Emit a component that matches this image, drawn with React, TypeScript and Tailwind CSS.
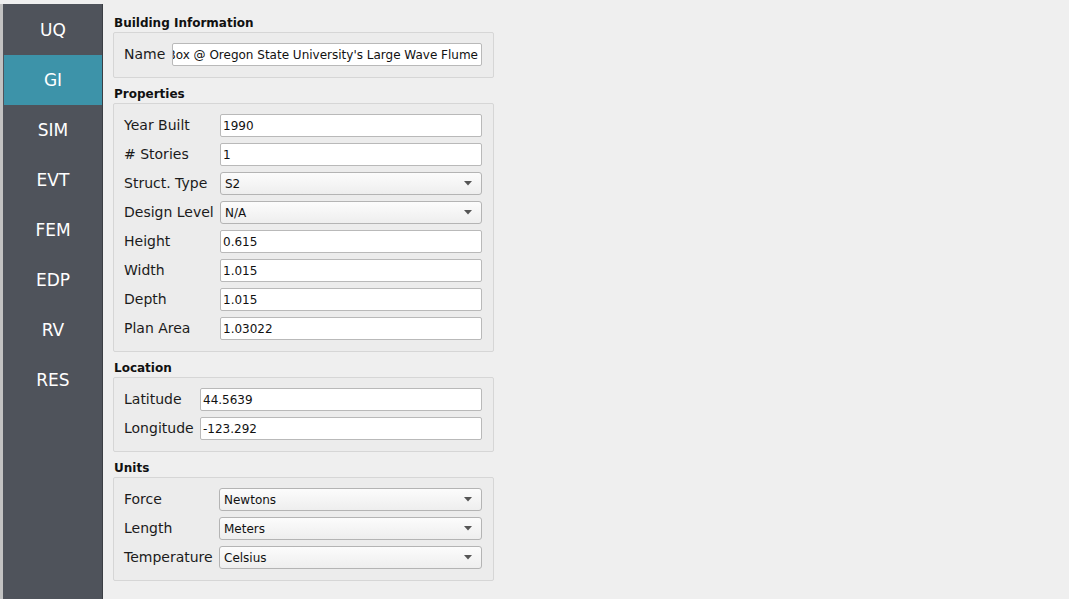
import React from "react";

const font = { fontFamily: '"DejaVu Sans", "Liberation Sans", sans-serif' };

function Field({ value }: { value: string }) {
  return (
    <div className="flex-1 h-[23px] bg-white border border-[#b9b9b9] rounded-[2px] flex items-center pl-[2px] text-[12px] text-[#111] overflow-hidden whitespace-nowrap">
      {value}
    </div>
  );
}

function Combo({ value }: { value: string }) {
  return (
    <div className="flex-1 h-[23px] border border-[#b4b4b4] rounded-[3px] bg-gradient-to-b from-[#fcfcfc] to-[#eeeeee] flex items-center pl-[4px] pr-[9px] text-[12px] text-[#111]">
      <span className="flex-1">{value}</span>
      <svg width="8" height="5" viewBox="0 0 8 5">
        <path d="M0 0 L8 0 L4 4.5 Z" fill="#555" />
      </svg>
    </div>
  );
}

function Row({ label, w, children }: { label: string; w: number; children: React.ReactNode }) {
  return (
    <div className="flex items-center h-[23px]">
      <div className="text-[14px] text-[#1b1b1b] shrink-0 whitespace-nowrap" style={{ width: w }}>
        {label}
      </div>
      {children}
    </div>
  );
}

function Section({ title, children }: { title: string; children: React.ReactNode }) {
  return (
    <div className="flex flex-col">
      <div className="h-[19px] flex items-center pl-[1px] text-[12px] font-bold text-[#111]">{title}</div>
      <div className="w-[381px] border border-[#d6d6d6] rounded-[2px] bg-[#ececec] pt-[10px] pb-[11px] pl-[10px] pr-[11px] flex flex-col gap-[6px]">
        {children}
      </div>
    </div>
  );
}

const nav = ["UQ", "GI", "SIM", "EVT", "FEM", "EDP", "RV", "RES"];

export default function App() {
  return (
    <div className="w-[1069px] h-[599px] bg-[#efefef] flex overflow-hidden" style={font}>
      <div className="flex pt-[4px] h-full">
        <div className="w-[3px] h-full bg-[#c2c2c2]" />
        <div className="w-[100px] h-full bg-[#4f535b] border-r border-[#3b3e44] pt-[1px] pl-[1px]">
          {nav.map((n) => (
            <div
              key={n}
              className={
                n === "GI"
                  ? "h-[50px] flex items-center justify-center pt-[2px] text-[17px] text-white bg-[#3d93a9]"
                  : "h-[50px] flex items-center justify-center pt-[2px] text-[17px] text-white"
              }
            >
              {n}
            </div>
          ))}
        </div>
      </div>
      <div className="ml-[10px] pt-[13px] flex flex-col gap-[6px]">
        <Section title="Building Information">
          <Row label="Name" w={48}>
            <div className="flex-1 min-w-0 h-[23px] bg-white border border-[#b9b9b9] rounded-[2px] flex items-center justify-end pr-[3px] text-[12px] text-[#111] overflow-hidden whitespace-nowrap">
              <span>Box @ Oregon State University's Large Wave Flume</span>
            </div>
          </Row>
        </Section>
        <Section title="Properties">
          <Row label="Year Built" w={96}><Field value="1990" /></Row>
          <Row label="# Stories" w={96}><Field value="1" /></Row>
          <Row label="Struct. Type" w={96}><Combo value="S2" /></Row>
          <Row label="Design Level" w={96}><Combo value="N/A" /></Row>
          <Row label="Height" w={96}><Field value="0.615" /></Row>
          <Row label="Width" w={96}><Field value="1.015" /></Row>
          <Row label="Depth" w={96}><Field value="1.015" /></Row>
          <Row label="Plan Area" w={96}><Field value="1.03022" /></Row>
        </Section>
        <Section title="Location">
          <Row label="Latitude" w={76}><Field value="44.5639" /></Row>
          <Row label="Longitude" w={76}><Field value="-123.292" /></Row>
        </Section>
        <Section title="Units">
          <Row label="Force" w={95}><Combo value="Newtons" /></Row>
          <Row label="Length" w={95}><Combo value="Meters" /></Row>
          <Row label="Temperature" w={95}><Combo value="Celsius" /></Row>
        </Section>
      </div>
    </div>
  );
}
